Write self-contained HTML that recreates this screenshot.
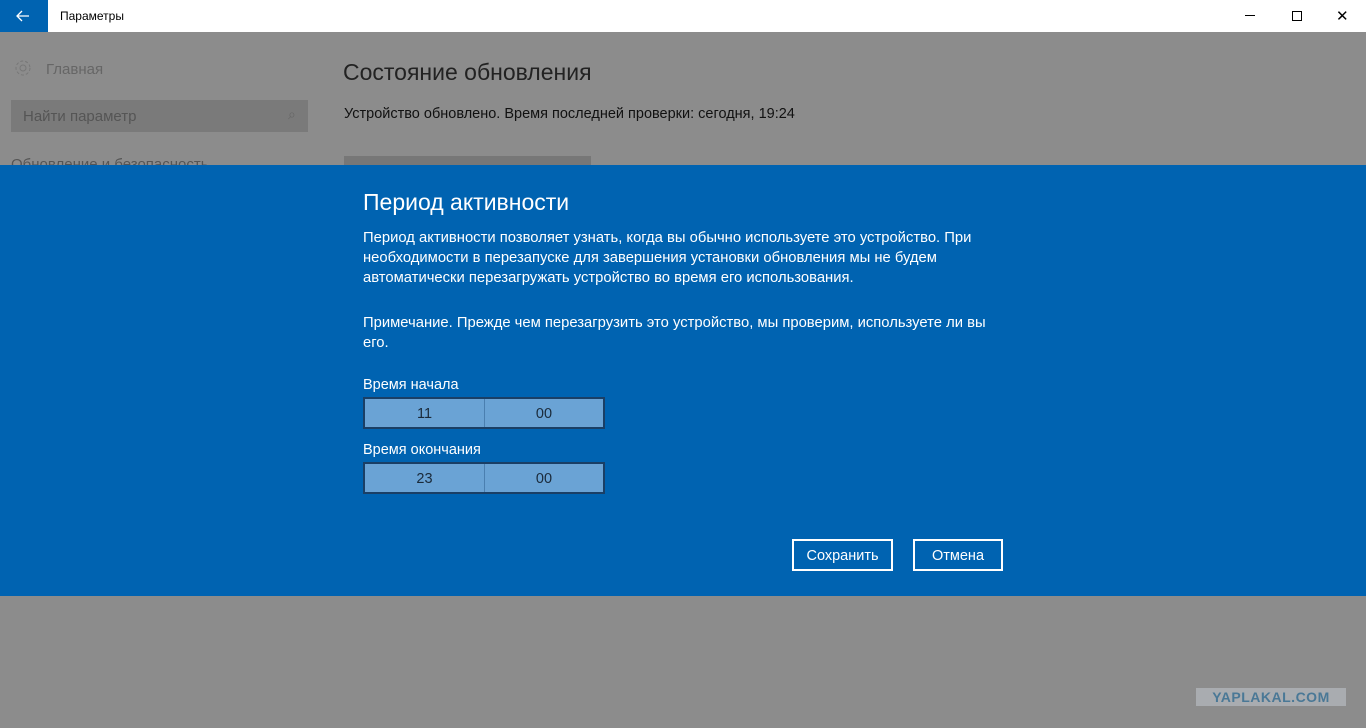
<!DOCTYPE html>
<html><head><meta charset="utf-8"><style>
body{margin:0;width:1366px;height:728px;background:#8c8c8c;position:relative;overflow:hidden;font-family:"Liberation Sans","DejaVu Sans",sans-serif}
.a{position:absolute;white-space:nowrap}
</style></head><body>
<div class="a" style="left:0;top:0;width:1366px;height:32px;background:#fff"></div>
<div class="a" style="left:0;top:0;width:48px;height:32px;background:#0063b1"></div>
<svg class="a" style="left:15px;top:8px" width="16" height="16"><path d="M14 8H2M7 3L2 8l5 5" stroke="#fff" stroke-width="1.3" fill="none"/></svg>
<div class="a" style="left:60px;top:9px;font-size:12px;color:#000">Параметры</div>
<div class="a" style="left:1245px;top:15px;width:10px;height:1px;background:#000"></div>
<div class="a" style="left:1292px;top:11px;width:8px;height:8px;border:1px solid #000"></div>
<div class="a" style="left:1336px;top:7px;font-size:15px;color:#000">✕</div>
<svg class="a" style="left:14px;top:59px" width="18" height="18"><circle cx="9" cy="9" r="3" stroke="#777" fill="none"/><circle cx="9" cy="9" r="7" stroke="#777" stroke-dasharray="3 2" fill="none"/></svg>
<div class="a" style="left:46px;top:61px;font-size:15px;color:#666">Главная</div>
<div class="a" style="left:11px;top:100px;width:297px;height:32px;background:#7a7a7a"></div>
<div class="a" style="left:23px;top:108px;font-size:15px;color:#555">Найти параметр</div>
<div class="a" style="left:288px;top:106px;font-size:14px;color:#666">⌕</div>
<div class="a" style="left:11px;top:156px;font-size:15px;color:#555">Обновление и безопасность</div>
<div class="a" style="left:343px;top:59px;font-size:23px;color:#222">Состояние обновления</div>
<div class="a" style="left:344px;top:106px;font-size:14.5px;color:#111">Устройство обновлено. Время последней проверки: сегодня, 19:24</div>
<div class="a" style="left:344px;top:156px;width:247px;height:20px;background:#777"></div>
<div class="a" style="left:0;top:165px;width:1366px;height:431px;background:#0063b1"></div>
<div class="a" style="left:363px;top:189px;font-size:23px;color:#fff">Период активности</div>
<div class="a" style="left:363px;top:228px;font-size:14.8px;line-height:20px;color:#fff">Период активности позволяет узнать, когда вы обычно используете это устройство. При<br>необходимости в перезапуске для завершения установки обновления мы не будем<br>автоматически перезагружать устройство во время его использования.</div>
<div class="a" style="left:363px;top:313px;font-size:14.8px;line-height:20px;color:#fff">Примечание. Прежде чем перезагрузить это устройство, мы проверим, используете ли вы<br>его.</div>
<div class="a" style="left:363px;top:377px;font-size:14.5px;color:#fff">Время начала</div>
<div class="a" style="left:363px;top:442px;font-size:14.5px;color:#fff">Время окончания</div>
<div class="a" style="left:363px;top:397px;width:238px;height:28px;border:2px solid #1a3f66;background:#6aa3d5;display:flex;font-size:14.5px;color:#1a2a3a">
<div style="width:119px;border-right:1px solid #4a7fb0;text-align:center;line-height:30px">11</div><div style="flex:1;text-align:center;line-height:30px">00</div></div>
<div class="a" style="left:363px;top:462px;width:238px;height:28px;border:2px solid #1a3f66;background:#6aa3d5;display:flex;font-size:14.5px;color:#1a2a3a">
<div style="width:119px;border-right:1px solid #4a7fb0;text-align:center;line-height:30px">23</div><div style="flex:1;text-align:center;line-height:30px">00</div></div>
<div class="a" style="left:792px;top:539px;width:97px;height:28px;border:2px solid #fff;color:#fff;font-size:14.5px;text-align:center;line-height:30px">Сохранить</div>
<div class="a" style="left:913px;top:539px;width:86px;height:28px;border:2px solid #fff;color:#fff;font-size:14.5px;text-align:center;line-height:30px">Отмена</div>
<div class="a" style="left:1196px;top:688px;width:150px;height:18px;background:#a9acb0;color:#4a7896;font-weight:bold;font-size:14px;text-align:center;line-height:18px;letter-spacing:0.5px">YAPLAKAL.COM</div>
</body></html>
